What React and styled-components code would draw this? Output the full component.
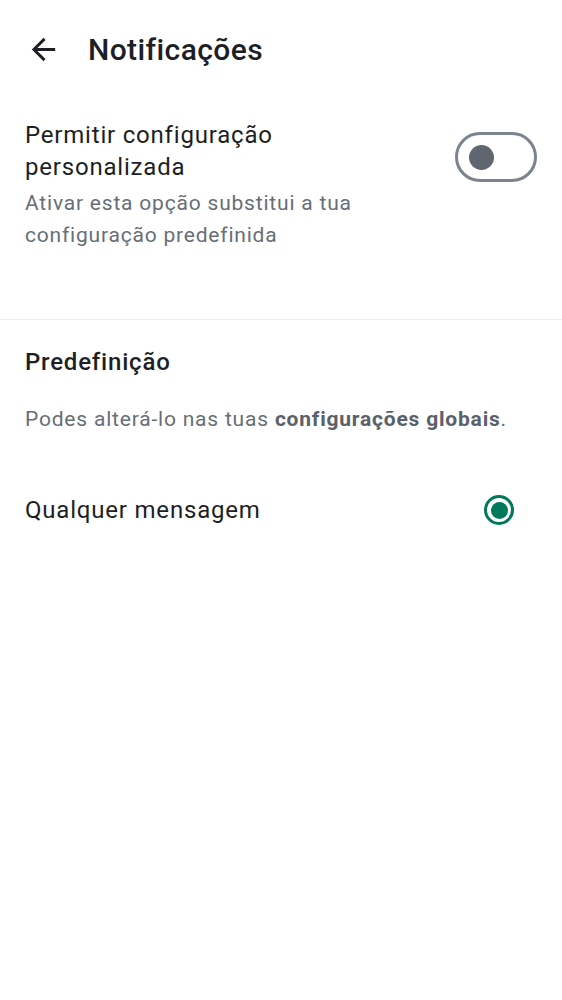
import React, { useState } from 'react'
import styled, { createGlobalStyle } from 'styled-components'

const GlobalStyle = createGlobalStyle`
  html, body {
    margin: 0;
    padding: 0;
    background: #ffffff;
  }
  body {
    font-family: Roboto, "Noto Sans", "Liberation Sans", sans-serif;
    color: #1d1f24;
  }
`

const Page = styled.div`
  width: 562px;
  min-height: 1000px;
  background: #fff;
`

const Header = styled.header`
  height: 98px;
  display: flex;
  align-items: center;
  padding: 0 24px 0 26px;
  gap: 27px;
`

const BackButton = styled.button`
  border: 0;
  background: none;
  padding: 0;
  width: 35px;
  height: 35px;
  display: flex;
  align-items: center;
  justify-content: center;
  color: #1d1f24;
`

const Title = styled.h1`
  margin: 0;
  font-size: 30px;
  font-weight: 500;
  letter-spacing: 0.4px;
`

const Section = styled.section`
  padding: ${p => p.$pad || '0 25px'};
  border-bottom: ${p => (p.$divider ? '1px solid #ececec' : 'none')};
`

const Row = styled.div`
  display: flex;
  align-items: ${p => p.$align || 'center'};
  justify-content: space-between;
`

const TextCol = styled.div`
  width: 370px;
`

const Label = styled.div`
  font-size: 24px;
  line-height: 32px;
  letter-spacing: 0.8px;
  font-weight: ${p => (p.$strong ? 500 : 400)};
`

const Hint = styled.div`
  font-size: 21px;
  line-height: 32px;
  letter-spacing: 0.8px;
  color: #676e77;
  margin-top: ${p => p.$gap || 0};

  b {
    font-weight: 700;
    color: #5a616b;
  }
`

const Track = styled.button`
  box-sizing: border-box;
  width: 82px;
  height: 50px;
  margin-top: 13px;
  border-radius: 25px;
  border: 3px solid #7b838c;
  background: #fff;
  padding: 0 0 0 11px;
  display: flex;
  align-items: center;
`

const Knob = styled.span`
  width: 25px;
  height: 25px;
  border-radius: 50%;
  background: #5f6670;
`

const Radio = styled.span`
  box-sizing: border-box;
  width: 30px;
  height: 30px;
  border-radius: 50%;
  border: 3px solid #00795a;
  display: flex;
  align-items: center;
  justify-content: center;

  &::after {
    content: '';
    width: 17px;
    height: 17px;
    border-radius: 50%;
    background: #00795a;
  }
`

export default function App() {
  const [custom, setCustom] = useState(false)

  return (
    <Page>
      <GlobalStyle />
      <Header>
        <BackButton aria-label="Voltar">
          <svg width="35" height="35" viewBox="0 0 24 24" fill="currentColor">
            <path d="M20 11H7.83l5.59-5.59L12 4l-8 8 8 8 1.41-1.41L7.83 13H20v-2z" />
          </svg>
        </BackButton>
        <Title>Notificações</Title>
      </Header>

      <Section $divider $pad="21px 25px 68px">
        <Row $align="flex-start">
          <TextCol>
            <Label>Permitir configuração personalizada</Label>
            <Hint $gap="4px">Ativar esta opção substitui a tua configuração predefinida</Hint>
          </TextCol>
          <Track onClick={() => setCustom(!custom)}>
            <Knob />
          </Track>
        </Row>
      </Section>

      <Section $pad="26px 25px 0">
        <Label $strong>Predefinição</Label>
      </Section>

      <Section $pad="25px 25px 0">
        <Hint>
          Podes alterá-lo nas tuas <b>configurações globais</b>.
        </Hint>
      </Section>

      <Section $pad="59px 48px 0 25px">
        <Row>
          <Label>Qualquer mensagem</Label>
          <Radio />
        </Row>
      </Section>
    </Page>
  )
}
